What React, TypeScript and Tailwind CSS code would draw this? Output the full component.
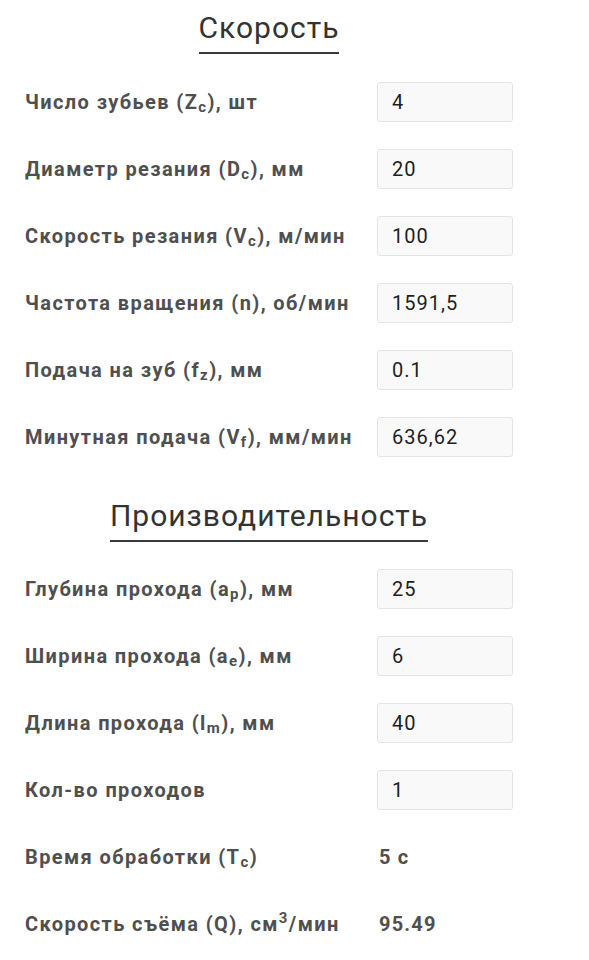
import type { ReactNode } from "react";

type Row = { label: ReactNode; value: string; input?: boolean };

const speedRows: Row[] = [
  { label: <>Число зубьев (Z<sub>c</sub>), шт</>, value: "4", input: true },
  { label: <>Диаметр резания (D<sub>c</sub>), мм</>, value: "20", input: true },
  { label: <>Скорость резания (V<sub>c</sub>), м/мин</>, value: "100", input: true },
  { label: <>Частота вращения (n), об/мин</>, value: "1591,5", input: true },
  { label: <>Подача на зуб (f<sub>z</sub>), мм</>, value: "0.1", input: true },
  { label: <>Минутная подача (V<sub>f</sub>), мм/мин</>, value: "636,62", input: true },
];

const perfRows: Row[] = [
  { label: <>Глубина прохода (a<sub>p</sub>), мм</>, value: "25", input: true },
  { label: <>Ширина прохода (a<sub>e</sub>), мм</>, value: "6", input: true },
  { label: <>Длина прохода (l<sub>m</sub>), мм</>, value: "40", input: true },
  { label: <>Кол-во проходов</>, value: "1", input: true },
  { label: <>Время обработки (T<sub>c</sub>)</>, value: "5 с" },
  { label: <>Скорость съёма (Q), см<sup>3</sup>/мин</>, value: "95.49" },
];

function SectionTitle({ children }: { children: ReactNode }) {
  return (
    <div className="flex justify-center">
      <h2 className="inline-block border-b-2 border-[#3a3a3a] pb-[6px] text-[30px] leading-[36px] font-normal tracking-[1px] text-[#333]">
        {children}
      </h2>
    </div>
  );
}

function FieldRow({ row }: { row: Row }) {
  return (
    <div className="flex h-[67px] items-center">
      <div className="w-[353px] text-[20px] font-bold tracking-[1.4px] text-[#4f4f4f]">{row.label}</div>
      {row.input ? (
        <input
          readOnly
          value={row.value}
          className="h-[40px] w-[136px] rounded-[3px] border border-[#e4e4e4] bg-[#f9f9f9] pl-[14px] text-[20px] tracking-[1px] text-[#1e1e1e] outline-none"
        />
      ) : (
        <div className="pl-[1px] text-[20px] font-bold tracking-[1.2px] text-[#4f4f4f]">{row.value}</div>
      )}
    </div>
  );
}

export default function App() {
  return (
    <div className="min-h-screen w-full bg-white font-['Roboto',sans-serif]">
      <div className="ml-[25px] w-[488px] pt-[10px]">
        <SectionTitle>Скорость</SectionTitle>
        <div className="mt-[14px]">
          {speedRows.map((r, i) => (
            <FieldRow key={i} row={r} />
          ))}
        </div>

        <div className="mt-[28px]">
          <SectionTitle>Производительность</SectionTitle>
        </div>
        <div className="mt-[13px]">
          {perfRows.map((r, i) => (
            <FieldRow key={i} row={r} />
          ))}
        </div>
      </div>
    </div>
  );
}
